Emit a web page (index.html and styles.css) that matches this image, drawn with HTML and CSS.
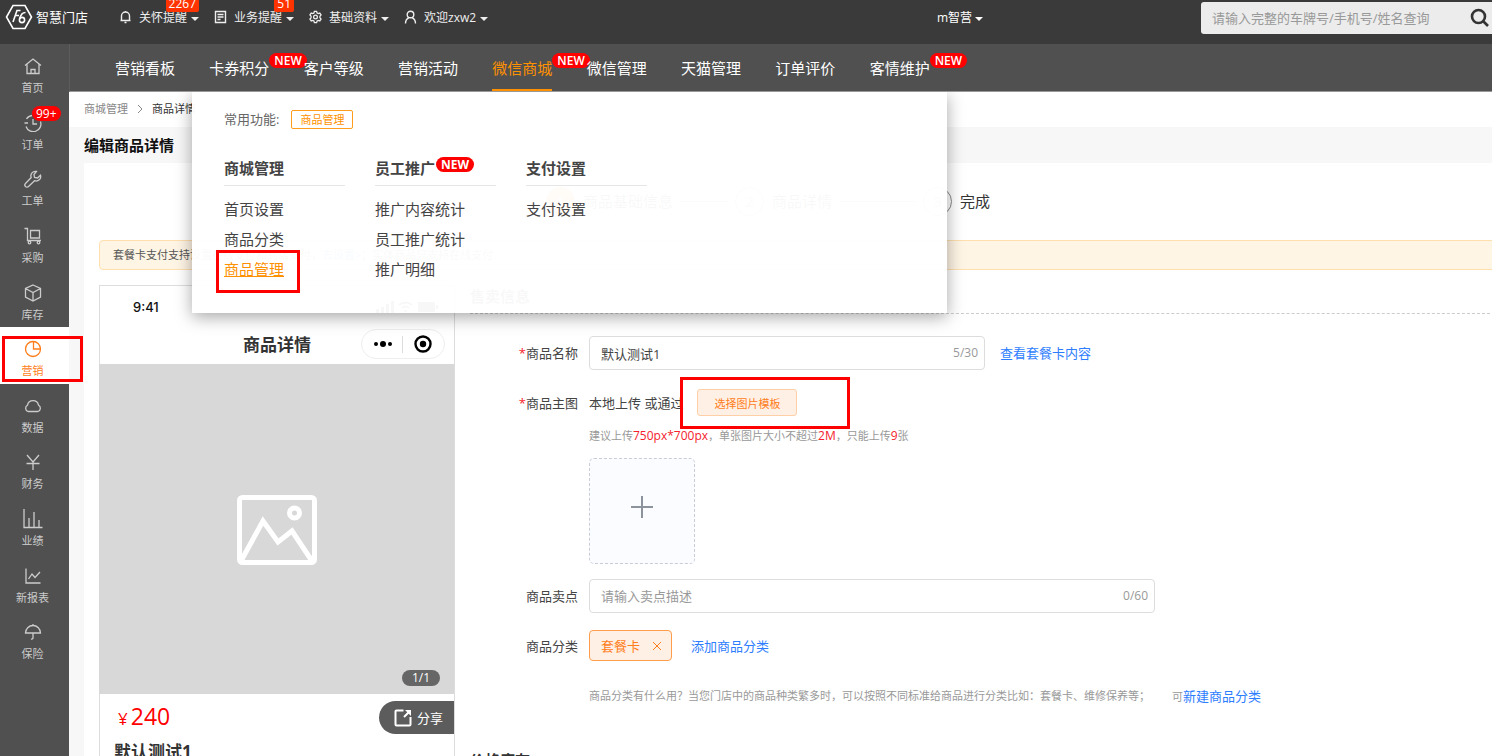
FILE: index.html
```html
<!DOCTYPE html>
<html lang="zh-CN">
<head>
<meta charset="utf-8">
<meta name="viewport" content="width=device-width, initial-scale=1">
<title>编辑商品详情</title>
<link rel="stylesheet" href="styles.css">
</head>
<body>
<div class="app">
  <header class="topbar">
    <a class="brand" href="#">
      <svg class="brand-mark" viewBox="0 0 28 26"><path d="M8 1.500h12l6.500 11.500L20 24.500H8L1.500 13z"/><path d="M15.500 6.500h-3.500L8 18M10.300 11.500h3.700"/><path d="M20.500 8.500c-3 0-5 2.500-5.800 6.500"/><circle cx="17" cy="16" r="2.600"/></svg>
      <span>智慧门店</span>
    </a>
    <nav class="quick">
      <button class="quick-item" type="button">
        <svg class="i12" viewBox="0 0 12 14"><path d="M2 10.500h8V6a4 4 0 0 0-8 0zM1 10.500h10M6 2V1M5 12.500h2"/></svg>
        <span>关怀提醒</span><i class="caret"></i><b class="count">2267</b>
      </button>
      <button class="quick-item" type="button">
        <svg class="i12" viewBox="0 0 12 14"><path d="M1 1.500h10v11H1zM3 4.500h6M3 7h6M3 9.500h3"/></svg>
        <span>业务提醒</span><i class="caret"></i><b class="count">51</b>
      </button>
      <button class="quick-item" type="button">
        <svg class="i12" viewBox="0 0 14 14"><path d="M5.800 1h2.400l.5 1.700 1.200.6 1.700-.5 1.400 2-1.200 1.300v1.800l1.200 1.300-1.400 2-1.700-.5-1.200.6L8.200 13H5.800l-.5-1.700-1.200-.6-1.700.5-1.400-2 1.200-1.300V6.100L1 4.800l1.400-2 1.700.5 1.200-.6z"/><circle cx="7" cy="7" r="2"/></svg>
        <span>基础资料</span><i class="caret"></i>
      </button>
      <button class="quick-item" type="button">
        <svg class="i12" viewBox="0 0 12 14"><circle cx="6" cy="4.500" r="3.300"/><path d="M1 13.500c0-3 1.500-5 3.500-6M11 13.500c0-3-1.500-5-3.500-6"/></svg>
        <span>欢迎zxw2</span><i class="caret"></i>
      </button>
    </nav>
    <button class="store" type="button"><span>m智营</span><i class="caret"></i></button>
    <form class="search">
      <input type="text" aria-label="查询" placeholder="请输入完整的车牌号/手机号/姓名查询">
      <button type="button" aria-label="搜索"><svg viewBox="0 0 20 20"><circle cx="8.500" cy="8.500" r="6.500"/><path d="M13 13l5 5"/></svg></button>
    </form>
  </header>

  <div class="body">
    <nav class="side">
      <a href="#"><svg viewBox="0 0 18 18"><path d="M1 8.500L9 2l8 6.500M3 7v9.500h12V7M7 16.500v-4h4v4"/></svg><span>首页</span></a>
      <a href="#"><svg viewBox="0 0 18 18"><path d="M2.500 5A7.500 7.500 0 0 1 8 1.500M16.500 7.500A7.500 7.500 0 0 1 2 12.500M0.500 9h3.500M9 5v5h4"/></svg><span>订单</span><b class="pill-count">99+</b></a>
      <a href="#"><svg viewBox="0 0 18 18"><path d="M12.500 1.500a4.500 4.500 0 0 0-5.300 6L1.500 13.500a2 2 0 0 0 3 3l6-5.800a4.500 4.500 0 0 0 6-5.500L13.500 8 10.500 7.500 10 4.500z"/></svg><span>工单</span></a>
      <a href="#"><svg viewBox="0 0 18 18"><path d="M0.500 1.500h3v12H17M6.500 3.500h9v7.500h-9z"/><circle cx="5.500" cy="15.500" r="1.300"/><circle cx="14.500" cy="15.500" r="1.300"/></svg><span>采购</span></a>
      <a href="#"><svg viewBox="0 0 18 18"><path d="M9 1l7.500 3.500v8.500L9 17l-7.500-4V4.500zM1.500 4.500L9 8.500l7.500-4M9 8.500V17"/></svg><span>库存</span></a>
      <a class="active" href="#"><svg viewBox="0 0 18 18"><circle cx="9" cy="9" r="7.500"/><path d="M9.500 1.500V9h7"/></svg><span>营销</span><i class="mark mark-side"></i></a>
      <a href="#"><svg viewBox="0 0 18 18"><path d="M4 14.500h10a3.500 3.500 0 0 0 .5-6.400 5.600 5.600 0 0 0-11 0A3.500 3.500 0 0 0 4 14.500z"/></svg><span>数据</span></a>
      <a href="#"><svg viewBox="0 0 18 18"><path d="M3 2l6 7 6-7M9 9v8M2.500 10.500h13"/></svg><span>财务</span></a>
      <a href="#"><svg class="wide" viewBox="0 0 20 20"><path d="M1 0v18.500h18.500M6 18V9M11 18V3M16 18v-7"/></svg><span>业绩</span></a>
      <a href="#"><svg viewBox="0 0 18 18"><path d="M2 1.500v14.500h14.500M4.500 12l3.500-5 3 3.500L16 5"/></svg><span>新报表</span></a>
      <a href="#"><svg viewBox="0 0 18 18"><path d="M1.500 10a7.500 7.500 0 0 1 15 0zM9 2.500V1M9 10v5a1.500 1.500 0 0 1-2 1"/></svg><span>保险</span></a>
    </nav>

    <div class="main">
      <nav class="nav">
        <div class="nav-list">
          <a href="#">营销看板</a>
          <a href="#">卡券积分<b class="new">NEW</b></a>
          <a href="#">客户等级</a>
          <a href="#">营销活动</a>
          <a class="on" href="#">微信商城<b class="new">NEW</b></a>
          <a href="#">微信管理</a>
          <a href="#">天猫管理</a>
          <a href="#">订单评价</a>
          <a href="#">客情维护<b class="new">NEW</b></a>
        </div>
        <div class="mega">
          <div class="common"><span>常用功能:</span><a href="#">商品管理</a></div>
          <div class="mega-cols">
            <section><h3>商城管理</h3><a href="#">首页设置</a><a href="#">商品分类</a><a class="cur" href="#">商品管理<i class="mark mark-menu"></i></a></section>
            <section><h3>员工推广<b class="new">NEW</b></h3><a href="#">推广内容统计</a><a href="#">员工推广统计</a><a href="#">推广明细</a></section>
            <section><h3>支付设置</h3><a href="#">支付设置</a></section>
          </div>
        </div>
      </nav>

      <div class="crumbs"><a href="#">商城管理</a><svg viewBox="0 0 6 10"><path d="M1 1l4 4-4 4"/></svg><span>商品详情</span></div>
      <div class="page">
        <h1>编辑商品详情</h1>
        <div class="content">
          <ol class="steps">
            <li class="done"><i>1</i><span>商品基础信息</span></li>
            <li><i>2</i><span>商品详情</span></li>
            <li><i>3</i><span>完成</span></li>
          </ol>
          <p class="notice">套餐卡支付支持设置在线支付和到店支付，<a href="#">去设置&gt;</a>；实体商品只支持在线支付</p>
          <div class="cols">
            <div class="phone">
              <div class="status"><b>9:41</b>
                <svg viewBox="0 0 64 12"><path d="M0 8h3v4H0zM5 6h3v6H5zM10 3h3v9h-3zM15 0h3v12h-3zM42 1h17v10H42zM60 4h2v4h-2z"/><path class="wave" d="M23 4a10 10 0 0 1 13 0M26 7a5 5 0 0 1 7 0M28.500 10h2"/></svg>
              </div>
              <div class="phone-head"><h2>商品详情</h2>
                <div class="capsule"><svg viewBox="0 0 82 28"><circle cx="14" cy="14" r="2"/><circle cx="21" cy="14" r="3"/><circle cx="28" cy="14" r="2"/><path class="sep" d="M40.500 6v17"/><circle class="ring" cx="61" cy="14" r="7.500"/><circle cx="61" cy="14" r="3.200"/></svg></div>
              </div>
              <div class="picture">
                <svg viewBox="0 0 80 70"><rect x="2.500" y="2.500" width="75" height="65" rx="3"/><circle cx="57.500" cy="18" r="5"/><path d="M4 66L26 26l15 21 14-11 20 30"/></svg>
                <span class="page-no">1/1</span>
              </div>
              <div class="price-row"><span class="price"><small>¥</small>240</span>
                <button class="share" type="button"><svg viewBox="0 0 18 18"><path d="M9.500 1.500h-7a1 1 0 0 0-1 1v13a1 1 0 0 0 1 1h13a1 1 0 0 0 1-1V8M10 8l5-5"/><path class="tip" d="M11 1h6v6z"/></svg>分享</button>
              </div>
              <p class="phone-name">默认测试1</p>
            </div>

            <form class="form">
              <h2>售卖信息</h2>
              <div class="row">
                <label for="name"><em>*</em>商品名称</label>
                <div class="field">
                  <div class="box box-name"><input id="name" type="text" value="默认测试1"><span>5/30</span></div>
                  <a href="#">查看套餐卡内容</a>
                </div>
              </div>
              <div class="row row-pic">
                <span class="label"><em>*</em>商品主图</span>
                <div class="field">
                  <span>本地上传 或通过</span>
                  <div class="pick"><button type="button">选择图片模板</button><i class="mark mark-pick"></i></div>
                </div>
              </div>
              <div class="under">
                <p class="hint">建议上传<em>750px*700px</em>，单张图片大小不超过<em>2M</em>，只能上传<em>9</em>张</p>
                <button class="upload" type="button" aria-label="上传图片"><svg viewBox="0 0 22 22"><path d="M11 0v22M0 11h22"/></svg></button>
              </div>
              <div class="row row-sell">
                <label for="sell">商品卖点</label>
                <div class="field"><div class="box box-sell"><input id="sell" type="text" placeholder="请输入卖点描述"><span>0/60</span></div></div>
              </div>
              <div class="row row-cat">
                <span class="label">商品分类</span>
                <div class="field">
                  <span class="tag">套餐卡<button type="button" aria-label="移除"><svg viewBox="0 0 8 8"><path d="M0 0l8 8M8 0L0 8"/></svg></button></span>
                  <a href="#">添加商品分类</a>
                </div>
              </div>
              <div class="under help">
                <p class="hint">商品分类有什么用？当您门店中的商品种类繁多时，可以按照不同标准给商品进行分类比如：套餐卡、维修保养等；</p>
                <p class="hint">可<a href="#">新建商品分类</a></p>
              </div>
              <h2 class="next">价格库存</h2>
            </form>
          </div>
        </div>
      </div>
    </div>
  </div>
</div>
</body>
</html>
```
FILE: styles.css
```css
* { box-sizing: border-box; }
body, h1, h2, h3, p, ol { margin: 0; padding: 0; }
body, button, input {
  font-family: "Open Sans", "Noto Sans CJK SC", sans-serif;
  font-size: 13px;
  color: #444;
}
body { background: #fff; line-height: 20px; }
a { color: inherit; text-decoration: none; }
i, em { font-style: normal; }
button { background: none; border: 0; padding: 0; cursor: pointer; }
svg { display: block; fill: none; stroke: currentColor; flex: none; }

.app { height: 100vh; overflow: hidden; display: flex; flex-direction: column; }

/* top bar */
.topbar {
  display: flex; align-items: flex-start; flex: none;
  height: 44px; background: #3a3a3a; color: #fff; padding-left: 5px;
}
.brand { display: flex; align-items: center; gap: 3px; height: 34px; width: 114px; font-size: 13px; font-weight: 400; }
.brand-mark { width: 28px; height: 26px; stroke-width: 1.6; }
.quick { display: flex; gap: 15px; height: 34px; }
.quick-item, .store { position: relative; display: flex; align-items: center; color: #eee; font-size: 12px; height: 34px; white-space: nowrap; }
.quick-item span { margin: 0 4px 0 7px; }
.i12 { width: 13px; height: 14px; stroke-width: 1.4; }
.caret { border: 4px solid transparent; border-top-color: currentColor; border-bottom: 0; margin-top: 3px; }
.count {
  position: absolute; right: 0; top: -4px; padding: 0 3px;
  background: #ff3300; color: #fff; font-size: 12px; font-weight: 400; line-height: 16px; border-radius: 2px;
}
.store { margin-left: auto; margin-right: 218px; color: #fff; gap: 3px; }
.search {
  display: flex; align-items: center; width: 299px; height: 32px; margin: 2px -8px 0 0;
  background: #ececec; border-radius: 3px; padding: 0 10px 0 11px;
}
.search input { flex: 1; min-width: 0; border: 0; background: none; outline: 0; padding: 0; }
.search input::placeholder { color: #999; }
.search svg { width: 20px; height: 20px; stroke: #333; stroke-width: 2.6; }

.body { flex: 1; display: flex; min-height: 0; }

/* sidebar */
.side {
  flex: none; width: 69px; background: #505050; color: #ccc;
  display: grid; grid-template-rows: repeat(11, 1fr); align-content: start; height: 623px;
  box-shadow: 0 400px 0 #505050;
}
.side a { position: relative; display: flex; flex-direction: column; align-items: center; gap: 5px; padding: 13px 4px 0 0; font-size: 11px; line-height: 16px; }
.side svg { width: 18px; height: 18px; stroke-width: 1.3; }
.side .wide { width: 20px; height: 20px; margin: -1px 0; }
.side .active { background: #fff; color: #ff7d1a; }
.pill-count {
  position: absolute; left: 32px; top: 5px; padding: 0 4px; border-radius: 8px;
  background: #f00; color: #fff; font-size: 12px; font-weight: 400; line-height: 15px;
}
.mark { position: absolute; border: 3px solid #f00; pointer-events: none; }
.mark-side { left: 2px; top: 9px; width: 81px; height: 46px; z-index: 3; }
.mark-menu { left: -8px; top: -4px; width: 84px; height: 43px; }
.mark-pick { left: -17px; top: -12px; width: 170px; height: 52px; }

/* primary navigation */
.main { flex: 1; min-width: 0; display: flex; flex-direction: column; }
.nav { position: relative; z-index: 2; flex: none; background: #505050; border-left: 1px solid #5c5c5c; border-bottom: 1px solid #999; }
.nav-list { display: grid; grid-template-columns: repeat(9, 1fr); justify-items: start; max-width: 894px; padding-left: 45px; }
.nav-list a { position: relative; color: #fff; font-size: 15px; line-height: 42px; padding-top: 3px; border-bottom: 2px solid transparent; white-space: nowrap; }
.nav-list .on { color: #ff9100; border-color: #ff9100; }
.new {
  position: absolute; left: 100%; top: 9px; padding: 0 5px; border-radius: 8px;
  background: #f00; color: #fff; font-size: 12px; font-weight: 600; line-height: 15px;
}
.mega {
  position: absolute; left: 122px; top: 48px; width: 755px; height: 221px; padding: 17px 32px;
  background: rgba(255, 255, 255, .97); box-shadow: 0 4px 16px rgba(0, 0, 0, .35);
  clip-path: inset(0 -30px -30px -30px);
}
.common { display: flex; align-items: center; gap: 12px; color: #666; }
.common a { border: 1px solid #ff9d1e; border-radius: 2px; color: #ff9100; font-size: 11px; line-height: 17px; padding: 0 8px; }
.mega-cols { display: grid; grid-template-columns: repeat(3, 121px); gap: 30px; margin-top: 27px; }
.mega-cols section { display: flex; flex-direction: column; align-items: flex-start; }
.mega-cols h3 { position: relative; width: 100%; font-size: 15px; line-height: 24px; padding-bottom: 5px; margin-bottom: 8px; border-bottom: 1px solid #e6e6e6; }
.mega-cols .new { left: 61px; top: 1px; font-weight: 700; }
.mega-cols a { position: relative; font-size: 15px; line-height: 30px; }
.mega-cols .cur { color: #ff9100; text-decoration: underline; }

/* page */
.crumbs { display: flex; align-items: center; gap: 9px; flex: none; height: 35px; padding: 0 0 2px 15px; font-size: 11px; color: #333; }
.crumbs a { color: #888; }
.crumbs svg { width: 6px; height: 10px; stroke: #888; }
.page { flex: 1; background: #f7f7f7; padding-left: 15px; }
h1 { font-size: 15px; line-height: 36px; color: #111; }
.content { background: #fff; min-height: 100%; padding: 24px 0 0 15px; }
.steps { display: flex; justify-content: center; padding-right: 55px; list-style: none; font-size: 15px; line-height: 29px; color: #333; }
.steps li { display: flex; align-items: center; gap: 8px; white-space: nowrap; }
.steps i { width: 29px; height: 29px; line-height: 27px; text-align: center; border: 1px solid #888; border-radius: 50%; color: #888; }
.steps .done i { background: #ff7d1a; border-color: #ff7d1a; color: #fff; }
.steps li:not(:last-child)::after { content: ""; width: 46px; height: 1px; margin-right: 8px; background: #888; }
.steps li:nth-child(2)::after { width: 75px; }
.notice { margin: 24px -8px 15px 0; padding: 0 13px; font-size: 11px; line-height: 28px; color: #555; background: #fff5e5; border: 1px solid #ffdfae; border-radius: 4px; }
.notice a { color: #2d7dff; }
.cols { display: grid; grid-template-columns: 356px 1fr; gap: 15px; }

/* phone preview */
.phone { border: 1px solid #ddd; height: 600px; }
.status { display: flex; justify-content: space-between; align-items: center; height: 42px; margin-bottom: 1px; padding: 0 14px 0 33px; color: #111; font-family: Inter, sans-serif; font-size: 13px; }
.status b { font-weight: 500; }
.status svg { width: 64px; height: 12px; fill: #111; stroke: none; }
.status .wave { fill: none; stroke: #111; stroke-width: 2; }
.phone-head { position: relative; height: 35px; }
.phone-head h2 { text-align: center; font-size: 17px; line-height: 32px; color: #333; }
.capsule { position: absolute; right: 9px; top: 0; border: 1px solid #eee; border-radius: 16px; }
.capsule svg { width: 82px; height: 28px; fill: #000; stroke: none; }
.capsule .ring { fill: none; stroke: #000; stroke-width: 2.4; }
.capsule .sep { stroke: #ddd; }
.picture { position: relative; display: flex; align-items: center; justify-content: center; height: 330px; margin: 0 0 0 -1px; padding-top: 2px; background: #d8d8d8; color: #fff; }
.picture svg { width: 80px; height: 70px; stroke-width: 5; }
.page-no { position: absolute; right: 14px; bottom: 8px; width: 38px; text-align: center; font-size: 12px; line-height: 16px; border-radius: 8px; background: #666; }
.price-row { display: flex; justify-content: space-between; align-items: center; padding: 7px 0 0 18px; height: 40px; }
.price { color: #f00; font-size: 23px; line-height: 32px; }
.price small { font-size: 17px; margin-right: 3px; }
.share { display: flex; align-items: center; gap: 5px; width: 75px; height: 33px; padding-left: 15px; border-radius: 17px 0 0 17px; background: #5c5c5c; color: #fff; }
.share svg { width: 18px; height: 18px; stroke-width: 2; }
.share .tip { fill: #fff; stroke: none; }
.phone-name { padding-left: 14px; font-size: 17px; font-weight: 700; line-height: 36px; color: #333; }

/* form */
.form h2 { font-size: 15px; line-height: 22px; padding-bottom: 6px; margin: 0 -8px 22px 0; border-bottom: 1px dashed #ccc; color: #333; }
.row { display: grid; grid-template-columns: 108px 1fr; gap: 11px; align-items: center; }
.row label, .label { text-align: right; }
em { color: #f5222d; }
.field { display: flex; align-items: center; }
.form a { color: #2d7dff; }
.box { position: relative; width: 100%; }
.box input { width: 100%; height: 34px; padding: 0 50px 0 11px; border: 1px solid #ddd; border-radius: 4px; outline: 0; background: #fff; }
.box input::placeholder { color: #999; }
.box span { position: absolute; right: 7px; top: 7px; color: #999; font-size: 12px; }
.box-name { max-width: 396px; margin-right: 15px; }
.box-sell { max-width: 566px; }
.row-pic { margin-top: 19px; }
.pick { position: relative; margin-left: 14px; }
.pick button { display: block; height: 27px; padding: 0 16px; font-size: 11px; color: #ff7d1a; background: #fff0e5; border: 1px solid #ffd0a8; border-radius: 3px; }
.under { padding-left: 119px; }
.hint { font-size: 11px; line-height: 20px; color: #999; }
.hint em { font-size: 12px; }
.row-pic + .under { padding-top: 10px; }
.upload { display: flex; align-items: center; justify-content: center; width: 106px; height: 106px; margin-top: 12px; padding-bottom: 9px; border: 1px dashed #c8ccd8; border-radius: 5px; background: #fbfcff; }
.upload svg { width: 22px; height: 22px; stroke: #8c939d; stroke-width: 2; }
.row-sell { margin-top: 15px; }
.row-cat { margin-top: 17px; }
.tag { display: flex; align-items: center; gap: 13px; height: 31px; padding: 0 10px 0 11px; margin-right: 19px; color: #ff7d1a; background: #fff0e5; border: 1px solid #ff9d4d; border-radius: 4px; }
.tag svg { width: 8px; height: 8px; color: #ff7d1a; }
.help { display: flex; gap: 22px; padding-top: 25px; white-space: nowrap; }
.help a { font-size: 13px; }
.form .next { margin-top: 42px; }
```
